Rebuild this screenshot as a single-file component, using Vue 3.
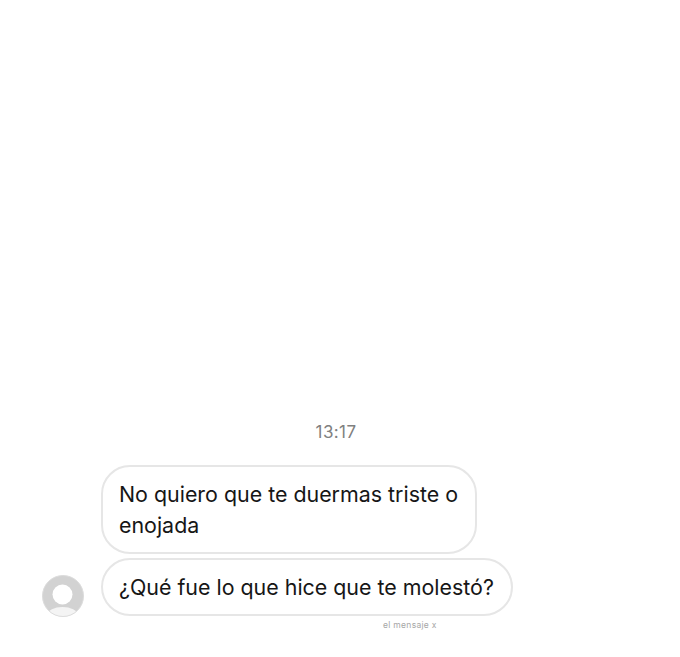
<script setup>
const messages = [
  { id: 1, text: 'No quiero que te duermas triste o\nenojada', width: '376px' },
  { id: 2, text: '¿Qué fue lo que hice que te molestó?', width: 'auto', avatar: true }
];
</script>

<template>
  <div class="chat">
    <div class="time">13:17</div>
    <div class="thread">
      <div v-for="msg in messages" :key="msg.id" class="row">
        <div class="avatar-slot">
          <svg v-if="msg.avatar" class="avatar" width="42" height="42" viewBox="0 0 42 42">
            <defs>
              <clipPath id="avatar-clip"><circle cx="21" cy="21" r="20.5" /></clipPath>
            </defs>
            <circle cx="21" cy="21" r="20.5" fill="#d2d2d2" />
            <circle cx="20.5" cy="19.5" r="10" fill="#fff" />
            <ellipse cx="20.5" cy="40" rx="15" ry="8" fill="#f4f4f4" clip-path="url(#avatar-clip)" />
            <circle cx="21" cy="21" r="20.5" fill="none" stroke="#dcdcdc" stroke-width="1" />
          </svg>
        </div>
        <div class="bubble" :style="{ width: msg.width }">{{ msg.text }}</div>
      </div>
    </div>
    <div class="caption">el mensaje x</div>
  </div>
</template>

<style>
html, body {
  background: #fff;
}
</style>

<style scoped>
.chat {
  width: 680px;
  height: 657px;
  box-sizing: border-box;
  padding-top: 422px;
  background: #fff;
  font-family: Inter, "Liberation Sans", sans-serif;
  overflow: hidden;
}

.time {
  text-align: center;
  font-size: 17px;
  line-height: 20px;
  letter-spacing: 0.4px;
  color: #808080;
  padding-right: 8px;
}

.thread {
  margin-top: 23px;
  display: flex;
  flex-direction: column;
  gap: 4px;
}

.row {
  display: flex;
  align-items: flex-end;
}

.avatar-slot {
  width: 42px;
  margin-left: 42px;
  margin-right: 17px;
  flex: none;
}

.avatar {
  display: block;
  margin-bottom: -1px;
}

.bubble {
  box-sizing: border-box;
  padding: 11.5px 17px 11.5px 16px;
  border: 2px solid #e6e6e6;
  border-radius: 29px;
  font-size: 21.4px;
  line-height: 31px;
  color: #161616;
  background: #fff;
  white-space: pre;
}

.caption {
  margin-top: 2px;
  margin-left: 383px;
  font-size: 8.5px;
  line-height: 14px;
  letter-spacing: 0.3px;
  color: #a6a6a6;
}
</style>
